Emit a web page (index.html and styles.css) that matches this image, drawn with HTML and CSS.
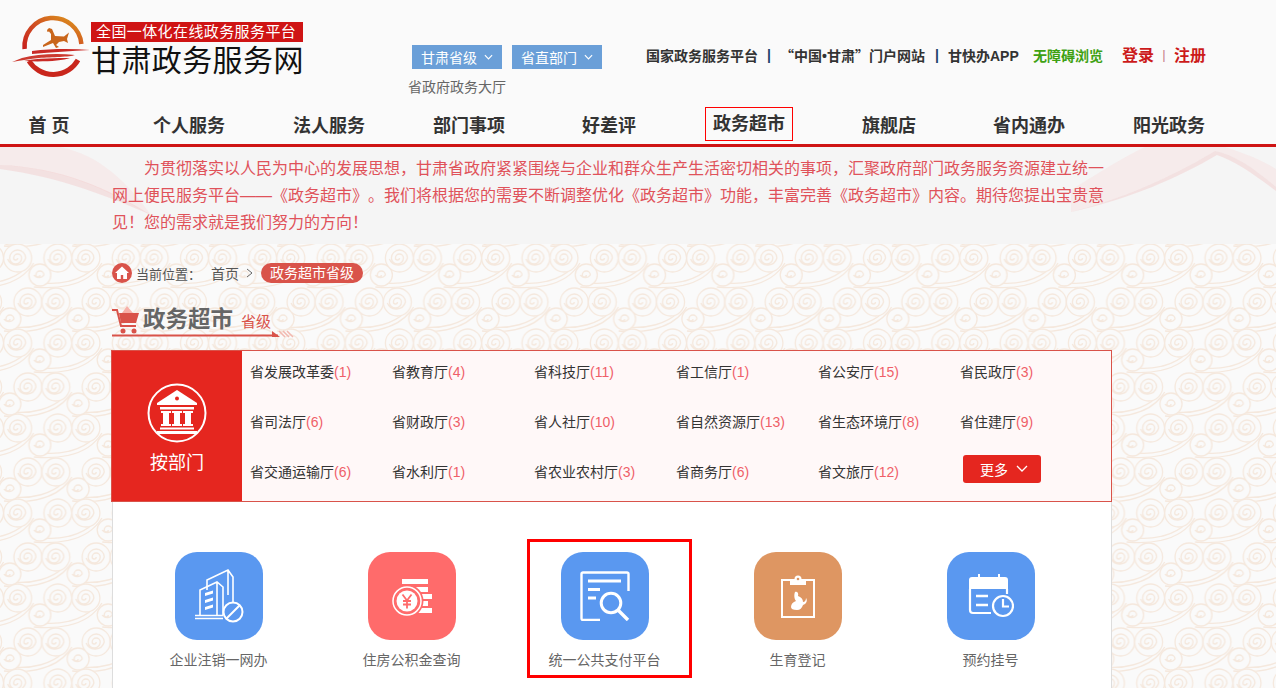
FILE: index.html
```html
<!DOCTYPE html>
<html lang="zh-CN">
<head>
<meta charset="utf-8">
<title>政务超市</title>
<link rel="stylesheet" href="styles.css">
</head>
<body>
<header class="header">
  <div class="top">
    <a class="logo">
      <svg class="logo-mark" viewBox="0 0 80 66" width="80" height="66">
        <defs>
          <linearGradient id="ring" x1="1" y1="0" x2="0" y2="1">
            <stop offset="0" stop-color="#dd9a1c"/><stop offset=".55" stop-color="#cf4a22"/><stop offset="1" stop-color="#c7201c"/>
          </linearGradient>
        </defs>
        <path d="M69.400 30A28.500 28.500 0 1 0 12.600 35" fill="none" stroke="url(#ring)" stroke-width="4.500"/>
        <path d="M17 47A28.500 28.500 0 0 0 66 46" fill="none" stroke="#c9261c" stroke-width="5"/>
        <path d="M35 16L37 14 40 15 43 22 52 22.500 57 18.500 55 25 56 29 52 27 47 28 44 31 47 33 44 34 41 29 31 33 31 31 39 26 39 20 37 17.500 35.500 18z" fill="#c9661c"/>
        <path d="M20 37C40 34.500 60 34.500 78 36 60 37 40 38 20 40z" fill="#c92a26"/>
        <path d="M10 44C25 40 45 39 63 41 58 43 40 43 27 44 18 45 10 46 0 48z" fill="#cc3a30"/>
        <path d="M12 47C25 44 45 44 58 44 50 47 30 48 12 47z" fill="#c92a26"/>
      </svg>
      <span class="logo-text">
        <span class="logo-slogan">全国一体化在线政务服务平台</span>
        <span class="logo-name">甘肃政务服务网</span>
      </span>
    </a>
    <div class="region">
      <div class="region-btns">
        <span class="sel">甘肃省级<svg class="chev" viewBox="0 0 10 6" width="9" height="6"><path d="M1 1l4 4 4-4"/></svg></span>
        <span class="sel">省直部门<svg class="chev" viewBox="0 0 10 6" width="9" height="6"><path d="M1 1l4 4 4-4"/></svg></span>
      </div>
      <div class="region-sub">省政府政务大厅</div>
    </div>
    <div class="links">
      <span>国家政务服务平台</span><i class="bar">|</i>
      <span class="quoted">“中国<span class="dot">•</span>甘肃”门户网站</span><i class="bar">|</i>
      <span class="app">甘快办APP</span>
      <span class="green">无障碍浏览</span>
    </div>
    <div class="auth"><span>登录</span><i>|</i><span>注册</span></div>
  </div>
  <nav class="nav">
    <a>首 页</a><a>个人服务</a><a>法人服务</a><a>部门事项</a><a>好差评</a>
    <a><span class="nav-on">政务超市</span></a><a>旗舰店</a><a>省内通办</a><a>阳光政务</a>
  </nav>
</header>

<section class="banner">
  <svg class="swoosh" viewBox="0 0 1276 97" width="1276" height="97">
    <path d="M0 0H60C100 8 128 36 151 68 110 46 70 22 0 18z" fill="#f8dcdc" opacity=".4"/>
    <path d="M0 18C60 20 110 42 151 68 110 50 60 30 0 22z" fill="#f2bcbc" opacity=".35"/>
    <path d="M1071 65V43C1100 25 1120 12 1145 0H1225C1250 8 1265 15 1276 22V40C1255 22 1235 8 1215 4 1180 25 1130 50 1071 65z" fill="#f8dcdc" opacity=".4"/>
    <path d="M1071 65C1130 50 1180 25 1215 4 1235 8 1255 22 1276 40V44C1255 28 1235 14 1217 8 1180 30 1130 52 1071 65z" fill="#f2bcbc" opacity=".35"/>
  </svg>
  <p class="banner-text">为贯彻落实以人民为中心的发展思想，甘肃省政府紧紧围绕与企业和群众生产生活密切相关的事项，汇聚政府部门政务服务资源建立统一网上便民服务平台——《政务超市》。我们将根据您的需要不断调整优化《政务超市》功能，丰富完善《政务超市》内容。期待您提出宝贵意见！您的需求就是我们努力的方向！</p>
</section>

<main class="main">
  <svg class="pattern" width="1276" height="444">
    <defs>
      <g id="cloud" fill="none" stroke="#f5e8dd" stroke-width="1.300">
        <path d="M-24 29C0 31 30 28 44 5M-16 25C4 27 24 22 36 10" />
        <circle cx="-18" cy="17" r="11" fill="#fafafa"/>
        <path d="M-18 17A2 2 0 0 1-22 17 4 4 0 0 1-14 17 6 6 0 0 1-24 17"/>
        <circle r="14" fill="#fafafa"/>
        <path d="M0 0A2 2 0 0 1-4 0 4 4 0 0 1 4 0 6 6 0 0 1-8 0 8 8 0 0 1 8 0 9.500 9.500 0 0 1-10 1"/>
        <circle cx="28" r="14" fill="#fafafa"/>
        <path d="M28 0A2 2 0 0 1 24 0 4 4 0 0 1 32 0 6 6 0 0 1 20 0 8 8 0 0 1 36 0 9.500 9.500 0 0 1 18 1"/>
      </g>
      <pattern id="clouds" width="68.300" height="85" patternUnits="userSpaceOnUse">
        <use href="#cloud" x="27.900" y="-27"/><use href="#cloud" x="-40.400" y="-27"/><use href="#cloud" x="96.200" y="-27"/>
        <use href="#cloud" x="-10.400" y="14"/><use href="#cloud" x="57.900" y="14"/><use href="#cloud" x="126.200" y="14"/>
        <use href="#cloud" x="-40.400" y="58"/><use href="#cloud" x="27.900" y="58"/><use href="#cloud" x="96.200" y="58"/>
        <use href="#cloud" x="-10.400" y="99"/><use href="#cloud" x="57.900" y="99"/><use href="#cloud" x="126.200" y="99"/>
      </pattern>
    </defs>
    <rect width="1276" height="444" fill="url(#clouds)"/>
  </svg>
  <div class="wrap">
    <div class="crumbs">
      <svg class="home" viewBox="0 0 20 20" width="20" height="20">
        <circle cx="10" cy="10" r="10" fill="#d9534a"/>
        <path d="M10 3.500L3 10h2v6h3.800v-4h2.400v4H15v-6h2z" fill="#fff"/>
      </svg>
      <span class="crumb-label">当前位置：</span>
      <span class="crumb-home">首页</span>
      <svg class="crumb-sep" viewBox="0 0 7 10" width="7" height="10"><path d="M1 1l5 4-5 4"/></svg>
      <span class="pill">政务超市省级</span>
    </div>
    <div class="title">
      <svg class="cart" viewBox="0 0 28 30" width="28" height="30">
        <path d="M15 1l6 7H10z" fill="#f7b0a8"/>
        <path d="M0 5h5l4 16h15" fill="none" stroke="#d9534a" stroke-width="2"/>
        <path d="M7 8h20l-3 10H9z" fill="#d9534a"/>
        <circle cx="11" cy="26" r="2.500" fill="#d9534a"/><circle cx="22" cy="26" r="2.500" fill="#d9534a"/>
      </svg>
      <span class="title-main">政务超市</span>
      <span class="title-sub">省级</span>
      <svg class="title-line" viewBox="0 0 182 8" width="182" height="8">
        <path d="M0 5.500H166" stroke="#d9534a" stroke-width="2"/>
        <path d="M160 1l8 6h-8z" fill="#d9534a"/>
        <path d="M167 1l6 6M171 1l6 6M175 1l6 6" stroke="#f2b8b0" stroke-width="1.500"/>
      </svg>
    </div>
    <section class="dept">
      <div class="dept-side">
        <svg class="dept-icon" viewBox="0 0 60 60" width="60" height="60">
          <circle cx="30" cy="30" r="28.500" fill="none" stroke="#fff" stroke-width="2"/>
          <path d="M30 7L10 20v2h40v-2z" fill="#fff"/>
          <circle cx="30" cy="15.500" r="2" fill="#e5261f"/>
          <path d="M13 24h34v2.500H13zM14 28h10v2h-2v11h2v2H14v-2h2V30h-2zM25 28h10v2h-2v11h2v2H25v-2h2V30h-2zM36 28h10v2h-2v11h2v2H36v-2h2V30h-2zM13 44.500h34v2H13zM10 48h40v3H10z" fill="#fff"/>
        </svg>
        <span class="dept-label">按部门</span>
      </div>
      <div class="dept-grid">
        <a>省发展改革委<b>(1)</b></a><a>省教育厅<b>(4)</b></a><a>省科技厅<b>(11)</b></a><a>省工信厅<b>(1)</b></a><a>省公安厅<b>(15)</b></a><a>省民政厅<b>(3)</b></a>
        <a>省司法厅<b>(6)</b></a><a>省财政厅<b>(3)</b></a><a>省人社厅<b>(10)</b></a><a>省自然资源厅<b>(13)</b></a><a>省生态环境厅<b>(8)</b></a><a>省住建厅<b>(9)</b></a>
        <a>省交通运输厅<b>(6)</b></a><a>省水利厅<b>(1)</b></a><a>省农业农村厅<b>(3)</b></a><a>省商务厅<b>(6)</b></a><a>省文旅厅<b>(12)</b></a>
        <a class="more-cell"><span class="more">更多<svg class="chev-more" viewBox="0 0 12 8" width="12" height="8"><path d="M1 1l5 5 5-5"/></svg></span></a>
      </div>
    </section>
    <section class="services">
      <div class="service">
        <div class="tile blue">
          <svg viewBox="0 -3 50 56" width="50" height="56" fill="none" stroke="#fff" stroke-width="1.600">
            <path d="M13 19V9L34-1l5 7V32M34-1V24"/>
            <path d="M6 44V19L23 11l6 5V44M23 11V44"/>
            <path d="M11 22l8-2.500v3l-8 2.500zM11 29l8-2.500v3l-8 2.500zM11 36l8-2.500v3l-8 2.500z" fill="#fff" stroke="none"/>
            <path d="M1 44.500H29M1 47.500H29"/>
            <circle cx="39" cy="41" r="9.500" stroke-width="2" fill="#5a98f0"/><path d="M32.500 47.500L45.500 34.500" stroke-width="2"/>
          </svg>
        </div>
        <span>企业注销一网办</span>
      </div>
      <div class="service">
        <div class="tile coral">
          <svg viewBox="0 0 50 50" width="50" height="50" fill="#fff">
            <rect x="15" y="8" width="26" height="5"/><rect x="20" y="16" width="21" height="5"/><rect x="34" y="23" width="11" height="5"/><rect x="34" y="30" width="7" height="5"/><rect x="30" y="37" width="15" height="5"/>
            <circle cx="20" cy="30" r="16.500" fill="#ff6b6b"/>
            <circle cx="20" cy="30" r="14" fill="none" stroke="#fff" stroke-width="1.500"/>
            <circle cx="20" cy="30" r="10.500" fill="#fff"/>
            <path d="M15.500 23.500l4.500 6 4.500-6M20 29.500v8M16 30h8M16 33.500h8" fill="none" stroke="#ff6b6b" stroke-width="1.800"/>
          </svg>
        </div>
        <span>住房公积金查询</span>
      </div>
      <div class="service boxed">
        <div class="tile blue">
          <svg viewBox="0 0 50 50" width="50" height="50" fill="none" stroke="#fff" stroke-width="2.400">
            <path d="M20 49H3a1.500 1.500 0 0 1-1.500-1.500V3A1.500 1.500 0 0 1 3 1.500h44A1.500 1.500 0 0 1 48.500 3V20"/>
            <path d="M8 10H41M8 18.500H20M8 27H16" stroke-width="3"/>
            <circle cx="31" cy="32" r="9.800" stroke-width="3"/><path d="M38 39L48 49" stroke-width="3.400"/>
          </svg>
        </div>
        <span>统一公共支付平台</span>
      </div>
      <div class="service">
        <div class="tile orange">
          <svg viewBox="0 0 36 44" width="36" height="44" fill="none" stroke="#fff" stroke-width="2">
            <path d="M10 6H2V43H34V6H26"/>
            <path d="M10 5h4.500a3.500 3.500 0 0 1 7 0H26v6H10z" fill="#fff" stroke="none"/>
            <circle cx="18" cy="5" r="1.300" fill="#de9662" stroke="none"/>
            <path d="M15 18c2-1 4 1 3 4 3 1 5 3 5 6 2 0 3-2 3-4 2 3 0 6-3 7-1 3-3 5-6 5-4 0-6-1-6-3 0-3 2-5 5-6-2-2-2-7-1-9z" fill="#fff" stroke="none"/>
          </svg>
        </div>
        <span>生育登记</span>
      </div>
      <div class="service">
        <div class="tile blue">
          <svg viewBox="0 0 46 44" width="46" height="44">
            <path d="M10 0h2v3h18V0h2v3h5a3 3 0 0 1 3 3v9H1V6a3 3 0 0 1 3-3h6z" fill="#fff"/>
            <path d="M2 15V36a3 3 0 0 0 3 3H23" fill="none" stroke="#fff" stroke-width="2.200"/>
            <path d="M39 15v5" stroke="#fff" stroke-width="2.200"/>
            <path d="M8 22H20M8 31H20" stroke="#fff" stroke-width="2.400"/>
            <circle cx="35" cy="32" r="10" fill="none" stroke="#fff" stroke-width="2.200"/>
            <path d="M35 25v7.500h6" fill="none" stroke="#fff" stroke-width="2.200"/>
          </svg>
        </div>
        <span>预约挂号</span>
      </div>
    </section>
  </div>
</main>
</body>
</html>
```
FILE: styles.css
```css
*, *::after { box-sizing: border-box; }
html, body { margin: 0; height: 688px; overflow: hidden; }
body {
  background: #fafafa;
  color: #333;
  font-family: "Liberation Sans", "Noto Sans CJK SC", sans-serif;
  font-size: 14px;
  text-spacing-trim: space-all;
}
a { color: inherit; text-decoration: none; }
i { font-style: normal; }

.header { height: 147px; border-bottom: 3px solid #cf1414; }
.top { display: flex; height: 107px; }

.logo { display: flex; width: 412px; padding: 14px 0 0 12px; }
.logo-mark { flex: none; }
.logo-text { display: flex; flex-direction: column; align-items: flex-start; margin: 8px 0 0 -1px; }
.logo-slogan {
  background: #cf1414; color: #fff; font-size: 15px; line-height: 20px;
  width: 212px; padding-left: 5px; letter-spacing: .4px; white-space: nowrap;
}
.logo-name { color: #111; font-size: 30px; line-height: 30px; margin-top: 4px; white-space: nowrap; letter-spacing: .4px; }

.region { width: 234px; padding-top: 45px; }
.region-btns { display: flex; gap: 10px; }
.sel {
  display: flex; align-items: center; justify-content: center; gap: 7px;
  width: 90px; height: 24px; background: #6a9fd8; color: #fff; font-size: 14px;
}
.chev { fill: none; stroke: #fff; stroke-width: 1.300; }
.region-sub { margin: 9px 0 0 -4px; color: #666; font-size: 14px; line-height: 18px; white-space: nowrap; }

.links { display: flex; align-items: center; height: 22px; margin-top: 44px; font-weight: 700; font-size: 14px; color: #333; white-space: nowrap; }
.bar { width: 22px; padding-left: 9px; color: #1d3f6a; }
.quoted { width: 146px; font-family: "Noto Sans CJK SC", sans-serif; }
.dot { font-family: "Liberation Sans", sans-serif; }
.app { width: 70px; }
.green { color: #3ea112; margin-left: 15px; width: 70px; }
.auth { display: flex; align-items: center; height: 22px; margin: 43px 0 0 19px; color: #cc1a1a; font-size: 16px; font-weight: 700; white-space: nowrap; }
.auth i { width: 20px; text-align: center; font-size: 13px; font-weight: 400; color: #c8808a; }

.nav { display: flex; margin-left: -21px; height: 34px; }
.nav a {
  display: flex; justify-content: center; align-items: center;
  width: 140px; flex: none; font-size: 18px; font-weight: 700; color: #333;
}
.nav-on { padding: 0 7px; height: 34px; line-height: 32px; border: 1px solid #f00; }

.banner { position: relative; height: 97px; background: #f5f5f5; overflow: hidden; }
.swoosh { position: absolute; left: 0; top: 0; }
.banner-text {
  position: relative; width: 1000px; margin: 8px 0 0 112px;
  color: #e0525a; font-size: 16px; line-height: 27px; text-indent: 32px;
}

.main { position: relative; height: 444px; overflow: hidden; }
.pattern { position: absolute; left: 0; top: 0; }
.wrap { position: relative; width: 1000px; margin: 0 0 0 112px; padding-top: 19px; }

.crumbs { display: flex; align-items: center; height: 20px; font-size: 13px; color: #555; }
.home { flex: none; }
.crumb-label { margin-left: 4px; width: 75px; }
.crumb-home { width: 35px; font-size: 14px; }
.crumb-sep { fill: none; stroke: #666; stroke-width: 1; flex: none; }
.pill {
  margin-left: 8px; width: 102px; height: 20px; line-height: 20px; border-radius: 10px;
  background: #d9534a; color: #fff; text-align: center; font-size: 14px;
}

.title { position: relative; display: flex; align-items: center; height: 30px; margin-top: 22px; }
.cart { flex: none; margin-right: 3px; }
.title-main { font-size: 22.500px; line-height: 26px; margin-top: -1px; font-weight: 700; color: #666; width: 98px; }
.title-sub { font-size: 15px; line-height: 20px; color: #d9534a; padding-top: 4px; }
.title-line { position: absolute; left: 0; top: 25px; }

.dept {
  display: flex; height: 152px; margin: 15px 0 0 -1px; width: 1001px;
  border: 1px solid #d9534a; background: #fff8f8;
}
.dept-side {
  width: 130px; flex: none; background: #e5261f; color: #fff;
  display: flex; flex-direction: column; align-items: center; padding-top: 32px;
}
.dept-label { font-size: 18px; line-height: 24px; margin-top: 8px; }
.dept-grid {
  flex: 1; display: grid; grid-template-columns: repeat(6, 142px); grid-auto-rows: 50px;
  padding-left: 8px; margin-top: -5px; align-items: center; align-content: start; font-size: 14px; color: #333; white-space: nowrap;
}
.dept-grid b { font-weight: 400; color: #ef5f68; font-size: 14px; }
.more-cell { display: block; margin-top: -4px; }
.more {
  display: flex; align-items: center; justify-content: center; gap: 8px;
  margin-left: 3px; padding-left: 4px; width: 78px; height: 28px; border-radius: 3px; background: #e5261f; color: #fff; font-size: 14px;
}
.chev-more { fill: none; stroke: #fff; stroke-width: 1.300; }

.services {
  display: flex; height: 200px; background: #fff; padding: 50px 0 0 9px;
  border-left: 1px solid #ddd; border-right: 1px solid #ddd;
  width: 1000px;
}
.service {
  position: relative; width: 193px; flex: none;
  display: flex; flex-direction: column; align-items: center; font-size: 14px; color: #666;
}
.service > span { margin-top: 11px; line-height: 18px; }
.tile { width: 88px; height: 88px; border-radius: 22px; display: flex; align-items: center; justify-content: center; }
.blue { background: #5a98f0; }
.coral { background: #ff6b6b; }
.orange { background: #de9662; }
.boxed::after {
  content: ""; position: absolute; left: 19px; top: -13px; width: 165px; height: 139px;
  border: 3px solid #f00;
}
```
